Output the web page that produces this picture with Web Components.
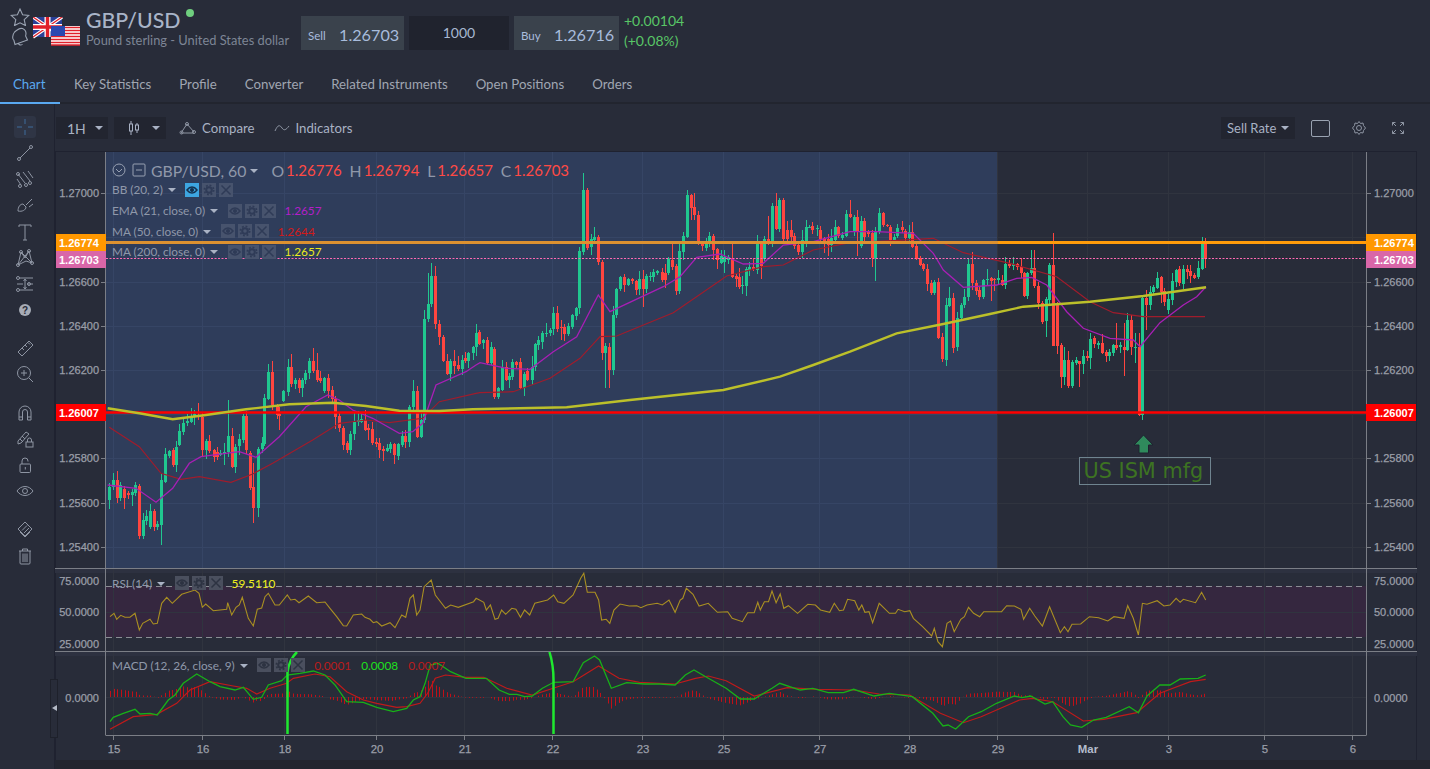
<!DOCTYPE html>
<html lang="en"><head><meta charset="utf-8"><title>GBP/USD</title>
<style>html,body{margin:0;height:100%;background:#282c39;overflow:hidden}</style></head>
<body><app-shell></app-shell>
<script>
const LATO='Lato,"Open Sans",sans-serif';
function comp(name,css,html){customElements.define(name,class extends HTMLElement{connectedCallback(){if(this.shadowRoot)return;const s=this.attachShadow({mode:'open'});const a=n=>this.getAttribute(n)||'';s.innerHTML='<style>'+css+'</style>'+(typeof html==='function'?html(a):html);}});}

comp('app-shell',`:host{display:flex;flex-direction:column;width:1430px;height:769px;font-family:${LATO};color:#a0a6b2;background:#282c39}
.main{display:flex;flex:1;min-height:0}.col{display:flex;flex-direction:column;flex:1;min-width:0}
.foot{flex:1;background:#22252f}`,
`<instrument-header></instrument-header><nav-tabs></nav-tabs><div class="main"><tool-rail></tool-rail><div class="col"><chart-toolbar></chart-toolbar><chart-view></chart-view><div class="foot"></div></div></div>`);

comp('instrument-header',`:host{display:flex;height:70px;box-sizing:border-box;align-items:flex-start;position:relative}
.ic{display:flex;flex-direction:column;width:20px;margin:8px 0 0 10px;gap:1px}
.ic svg{display:block}
.flags{width:47px;height:30px;margin:17px 0 0 3px;display:block}
.t{margin:6px 0 0 6px;width:215px}
.name{font-size:21.300px;line-height:28px;font-weight:500;color:#a9b4c8;display:flex}
.dot{width:8px;height:8px;border-radius:50%;background:#6fcf7f;margin:3px 0 0 6px}
.sub{font-size:12.850px;line-height:14px;color:#7d8595;white-space:nowrap;margin-top:-1px}
.q{display:flex;gap:5px;margin-top:16px}
.chg{margin:11px 0 0 5px;font-size:14px;line-height:20px;color:#59c667}`,
`<div class="ic"><svg width="20" height="18" viewBox="0 0 20 18" fill="none" stroke="#9aa3b2" stroke-width="1.1"><path d="M10 1l2.6 5.7 6.2.7-4.6 4.2 1.3 6L10 14.8 4.500 17.600l1.300-6L1.200 7.400l6.200-.7z"/></svg>
<svg width="20" height="19" viewBox="0 0 20 19" fill="none" stroke="#9aa3b2" stroke-width="1.1"><path d="M12.500 1.500c2.900 1.300 4 4.400 3.100 7.400l1.900 4.100-12.500 4.500-1.100-4.200C2.300 12.300 2 8 4.600 5 6.700 3 10 .8 12.500 1.500zM8 16.200c.6 1.800 2.700 2.300 4.500 1.200"/></svg></div>
<svg class="flags" viewBox="0 0 47 30"><g><rect x="0" y="0" width="29" height="20" fill="#2a3f96"/><path d="M0 0L29 20M29 0L0 20" stroke="#fff" stroke-width="3.400"/><path d="M0 0L29 20M29 0L0 20" stroke="#e0202a" stroke-width="1.300"/><path d="M14.500 0V20M0 10H29" stroke="#fff" stroke-width="6"/><path d="M14.500 0V20M0 10H29" stroke="#e0202a" stroke-width="3.400"/></g>
<g><rect x="18" y="9" width="29" height="19" fill="#fff"/><path d="M18 10.500H47M18 13.500H47M18 16.500H47M18 19.500H47M18 22.500H47M18 25.500H47M18 28H47" stroke="#e0202a" stroke-width="1.500"/><rect x="18" y="9" width="14" height="10" fill="#2b48b0"/></g></svg>
<div class="t"><div class="name">GBP/USD<span class="dot"></span></div><div class="sub">Pound sterling - United States dollar</div></div>
<div class="q"><quote-box label="Sell" value="1.26703" w="103"></quote-box><div style="width:100px;height:34px;background:#20232e;font-size:14px;line-height:34px;text-align:center;color:#a8b8d2">1000</div><quote-box label="Buy" value="1.26716" w="105"></quote-box></div>
<div class="chg">+0.00104<br>(+0.08%)</div>`);

comp('quote-box',`:host{display:block;height:34px;background:#3a424c;box-sizing:border-box;white-space:nowrap}
.b{display:flex;align-items:center;height:100%;box-sizing:border-box;padding:3px 0 0 7px}
.l{font-size:11.500px;color:#a8bcdc;width:31px;margin-top:1px}.v{font-size:16.200px;color:#a8bcdc}`,
a=>`<div class="b" style="width:${a('w')}px"><span class="l" ${a('label')=='Buy'?'style="width:33px"':''}>${a('label')}</span><span class="v">${a('value')}</span></div>`);

comp('nav-tabs',`:host{display:flex;height:34px;box-sizing:border-box;border-bottom:2px solid #22252f;font-size:13.250px;color:#a0a6b2}
span{padding:0 14px;line-height:29px;height:34px;box-sizing:border-box;white-space:nowrap}
.on{color:#5aa9f0;border-bottom:2px solid #5aa9f0;padding:0 0 0 13px;width:60px}`,
`<span class="on">Chart</span><span>Key Statistics</span><span>Profile</span><span>Converter</span><span>Related Instruments</span><span>Open Positions</span><span>Orders</span>`);

const s=(b,w=20,h=20)=>`<svg width="${w}" height="${h}" viewBox="0 0 20 20" fill="none" stroke="#8e95a3" stroke-width="1">${b}</svg>`;
const dotc=(x,y)=>`<circle cx="${x}" cy="${y}" r="1.500"/>`;
comp('tool-rail',`:host{display:flex;flex-direction:column;align-items:center;width:55px;box-sizing:border-box;border-right:1px solid #1f2230;padding:12px 5px 0 0;flex:none}
div{height:26.200px;width:22px;display:flex;align-items:center;justify-content:center;flex:none}
.cur{height:22px;background:#2f3545;border-radius:3px;margin-bottom:1.900px}.g1{margin-top:12px}.g2{margin-top:12px}
svg{display:block;flex:none}`,
`<div class="cur">${s('<path d="M2 10H7M13 10H18M10 2V7M10 13V18" stroke="#3f6d9c"/>')}</div>
<div>${s('<path d="M5 15L15 5"/>'+dotc(4,16)+dotc(16,4))}</div>
<div>${s('<path d="M3 5L10 14M8 3L15 12M13 2L18 9"/><path d="M2 10L6 16"/>'+dotc(5,17)+dotc(11,16)+dotc(3,5)+dotc(15,14))}</div>
<div>${s('<path d="M3 16c0-4 2-7 5-7l3 3c0 3-4 5-8 4zM11 10l6-6M14 12l4-3"/>')}</div>
<div>${s('<path d="M4 3H16M10 3V18M8 18H12M4 3V5M16 3V5"/>')}</div>
<div>${s('<path d="M3 17L6 4L10 10L14 3L17 15L11 13L3 17M6 4L17 15M14 3L3 17"/>'+dotc(3,17)+dotc(6,4)+dotc(14,3)+dotc(17,15))}</div>
<div>${s('<path d="M4 4H18M2 10H8M12 10H18M4 16H18M10 5V15M8.500 7L10 5L11.500 7M8.500 13L10 15L11.500 13"/>'+dotc(3,4)+dotc(14,10)+dotc(3,16))}</div>
<div>${`<svg width="20" height="20" viewBox="0 0 20 20"><circle cx="10" cy="10" r="6" fill="#a7acb6"/><text x="10" y="13.500" text-anchor="middle" font-family="Liberation Sans" font-weight="700" font-size="10" fill="#272b38">?</text></svg>`}</div>
<div class="g1">${s('<path d="M3 14L14 3L18 7L7 18ZM7 10L9 12M10 7L12 9M13 4.500L15 6.500"/>')}</div>
<div>${s('<circle cx="9" cy="9" r="6.500"/><path d="M14 14L18 18M6 9H12M9 6V12" />')}</div>
<div class="g2">${s('<path d="M4 17V9a6 6 0 0 1 12 0V17H12.500V9a2.500 2.500 0 0 0-5 0V17ZM4 14H7.500M12.500 14H16"/>')}</div>
<div>${s('<path d="M3 12L11 3L14 5L6 14L3 15ZM5 10L8 13M7 7L10 10"/><rect x="11" y="13" width="7" height="5"/><path d="M12.500 13v-2a2 2 0 0 1 4 0v2"/>')}</div>
<div>${s('<rect x="5" y="9" width="10.500" height="8.500" rx="1"/><path d="M7 9V6a3 3 0 0 1 6 0v.5M10.300 12v2.500"/>')}</div>
<div>${s('<path d="M2 10c4-6 12-6 16 0c-4 6-12 6-16 0z"/><circle cx="10" cy="10" r="2.500"/>')}</div>
<div class="g1">${s('<path d="M10 3L17 10L10 17L3 10Z"/><path d="M5 13L10 18L15 13M7 11.500L12 6.500M9 14L14 9"/>')}</div>
<div>${s('<path d="M4 5H16M5 5V17a1 1 0 0 0 1 1H14a1 1 0 0 0 1-1V5M7.500 5V3H12.500V5M8 7.500V16M10 7.500V16M12 7.500V16"/>')}</div>`);

comp('drop-select',`:host{display:inline-flex;align-items:center;height:22px;background:#222530;box-sizing:border-box;color:#a9b2c4;font-size:13px;white-space:nowrap;flex:none;justify-content:space-between;padding:0 6px 0 6px}
i{border:4px solid transparent;border-top:4px solid #a9b2c4;border-bottom:0;display:block}`,a=>`<slot></slot><i></i>`);

comp('chart-toolbar',`:host{display:flex;height:47px;align-items:center;box-sizing:border-box;padding:1px 0 0 1px;color:#a9b2c4;font-size:13.200px;position:relative}
.a{display:flex;align-items:center;gap:5px}.sp{flex:1}svg{display:block;flex:none}
.sq{width:17px;height:15px;border:1px solid #9aa3b2;border-radius:2px;margin:0 21px 0 16px}`,
`<drop-select style="width:52px;padding-left:11px;padding-right:5px;font-size:14px">1H</drop-select>
<drop-select style="width:52px;margin-left:6px;padding-left:13px"><svg width="14" height="16" viewBox="0 0 14 16" fill="none" stroke="#a9b2c4"><path d="M4 1V15M10 3V13"/><rect x="2.500" y="4" width="3" height="7" fill="#222530"/><rect x="8.500" y="5" width="3" height="5" fill="#222530"/></svg></drop-select>
<div class="a" style="margin-left:13px"><svg width="18" height="14" viewBox="0 0 18 14" fill="none" stroke="#8e95a3"><path d="M2 12L8 3L15 11M2 12H15"/><circle cx="2.500" cy="11.500" r="1.500"/><circle cx="8" cy="3" r="1.500"/><circle cx="15" cy="11" r="1.500"/></svg><span>Compare</span></div>
<div class="a" style="margin-left:20px"><svg width="16" height="10" viewBox="0 0 16 10" fill="none" stroke="#8e95a3"><path d="M1 8C4 1 6 2 8 5S12 7 15 3"/></svg><span>Indicators</span></div>
<div class="sp"></div>
<drop-select style="width:74px">Sell Rate</drop-select><div class="sq"></div>
<svg width="16" height="16" viewBox="0 0 16 16" fill="none" stroke="#8e95a3"><circle cx="8" cy="8" r="2.500"/><path d="M8 1.500L9.500 3.500L12 3L12.500 5.500L14.500 8L12.500 10.500L12 13L9.500 12.500L8 14.500L6.500 12.500L4 13L3.500 10.500L1.500 8L3.500 5.500L4 3L6.500 3.500Z"/></svg>
<svg style="margin:0 25px 0 24px" width="14" height="14" viewBox="0 0 14 14" fill="none" stroke="#8e95a3"><path d="M1.500 1.500L5 5M12.500 1.500L9 5M1.500 12.500L5 9M12.500 12.500L9 9M1.500 4.500V1.500H4.500M9.500 1.500H12.500V4.500M1.500 9.500V12.500H4.500M9.500 12.500H12.500V9.500"/></svg>`);

comp('mini-btns',`:host{display:inline-flex;gap:3px;vertical-align:middle}
b{display:block;width:14px;height:14px;background:var(--b,#47536d)}
b.on{background:#3da5e0}svg{display:block}`,
a=>{const d=a('dark');const c=d?'#2d3342':'#2f3b57';const bg=d?'style="background:#4a4f5e"':'';const eye=`<svg viewBox="0 0 14 14" width="14" height="14" fill="none" stroke="${a('on')?'#14314f':c}" stroke-width="1.500"><path d="M2 7c3-4 7-4 10 0c-3 4-7 4-10 0z"/><circle cx="7" cy="7" r="1.300" fill="${a('on')?'#14314f':c}"/></svg>`;
return `<b class="${a('on')?'on':''}" ${bg}>${eye}</b><b ${bg}><svg viewBox="0 0 14 14" width="14" height="14" fill="none" stroke="${c}"><circle cx="7" cy="7" r="2.800" stroke-width="2"/><circle cx="7" cy="7" r="4.700" stroke-width="1.600" stroke-dasharray="1.850 1.840"/></svg></b><b ${bg}><svg viewBox="0 0 14 14" width="14" height="14" fill="none" stroke="${c}" stroke-width="1.500"><path d="M2.500 2.500L11.500 11.500M11.500 2.500L2.500 11.500"/></svg></b>`});

comp('ind-row',`:host{display:flex;align-items:center;height:20.700px;font-size:11.800px;color:#8f98aa;white-space:nowrap}
i{border:4px solid transparent;border-top:4px solid #a9b2c4;border-bottom:0;margin:1px 9.500px 0 5px;display:block}
.v{font-size:11.800px;margin-left:9px}`,
a=>`<span>${a('name')}</span><i></i><mini-btns ${a('on')?'on="1"':''} ${a('dark')?'dark="1"':''}></mini-btns>${(a('v')?a('v').split('|'):[]).map((x,i)=>{const[t,c]=x.split('~');return `<span class="v" style="color:${c};${i?'margin-left:10px':''}">${t}</span>`}).join('')}`);

comp('chart-legend',`:host{display:block;position:absolute;left:57px;top:8px;color:#8f98aa;white-space:nowrap;font-size:15.800px}
.m{display:flex;align-items:center;height:22px;margin-bottom:0}
i{border:4px solid transparent;border-top:4px solid #a9b2c4;border-bottom:0;margin:1px 13px 0 4px;display:block}
.l{margin-right:2px}.r{color:#ff4a44;font-size:15px;margin-right:6.500px;width:57px}svg{display:block;flex:none}
.rows{margin-top:-1.500px}`,
`<div class="m"><svg width="14" height="14" viewBox="0 0 14 14" fill="none" stroke="#98a1b2"><circle cx="7" cy="7" r="6"/><path d="M4 6L7 9L10 6"/></svg><svg style="margin:0 5px 0 6px" width="14" height="14" viewBox="0 0 14 14" fill="none" stroke="#98a1b2"><rect x="1" y="1" width="12" height="12" rx="1"/><path d="M4 7H10"/></svg><span>GBP/USD, 60</span><i></i><span class="l">O</span><span class="r">1.26776</span><span class="l">H</span><span class="r">1.26794</span><span class="l">L</span><span class="r">1.26657</span><span class="l">C</span><span class="r">1.26703</span></div>
<div class="rows"><ind-row name="BB (20, 2)" on="1"></ind-row><ind-row name="EMA (21, close, 0)" v="1.2657~#b41ec9"></ind-row><ind-row name="MA (50, close, 0)" v="1.2644~#d21a1a"></ind-row><ind-row name="MA (200, close, 0)" v="1.2657~#eaea1c"></ind-row></div>`);

comp('pane-legend',`:host{display:block;position:absolute;left:57px;white-space:nowrap}`,a=>`<ind-row name="${a('name')}" v="${a('v')}" dark="1"></ind-row>`);

/* --- chart data, in reference crop coordinates --- */
const C9=`g10 710 750,g22 690 712,r32 690 745,g43 705 745,r55 718 745,r67 728 735,g77 725 735,g88 706 730,r100 708 858,g110 810 858,g121 798 812,g132 783 830,r143 783 830,g154 822 830,g165 690 825 670 885,g178 612 695,g188 604 620,r200 600 645,g210 590 645,g220 543 585,g232 518 545,g243 514 520,g254 498 515,g265 492 500,r277 495 500 460 510,r288 500 600,g300 573 600,r310 573 603,r325 600 620,r332 605 620,g343 610 615,g354 605 612,g365 558 607 450 620,r377 558 650,g388 590 650,g400 568 590,g410 498 570,r420 498 600,r433 610 715,r442 710 773 640 820,g455 597 773,g467 580 597,g475 443 580,g487 365 445 343 450,r498 365 465 333 480,r512 465 495,r520 492 497 470 540,g532 423 453,g545 350 425,r555 350 400 312 412,g566 390 402,r578 390 413,g589 390 415,g598 370 390,g610 333 370,r622 333 362 295 370,r632 360 390 310 395,r643 385 395,g655 385 423,r665 383 423,r678 420 447,r688 447 500,r700 498 533,r710 533 583,r722 578 600,g733 553 600,g743 517 553,g755 510 517,g765 507 515,r776 510 540,r787 535 540,r798 538 580,r810 575 580,r820 578 600,r832 597 603,g843 593 603,g853 583 597,r865 583 617,g877 583 620,g887 558 585,r898 558 575,g910 470 575,g920 423 470 390 480,r932 423 560,g944 510 560,g955 207 510,g965 163 207 70 215,g975 78 163 40 170,r988 78 222,r998 222 262,r1010 260 332,r1022 332 372,g1033 333 372,r1043 333 347,r1055 345 358,g1067 330 358,r1077 325 335,g1087 310 335,g1100 292 310,g1110 248 290,r1120 245 280`;
const C10=`g10 510 520,r22 510 580,g32 532 580,r43 538 682,g55 655 682,g65 590 658,r77 590 630,g87 618 630,g97 575 620,r108 575 585,r120 575 653,g132 613 655,r142 602 630,g155 590 630,g165 522 590,g175 510 525,g187 488 515,g198 488 490,g210 480 490,g220 430 478,r232 428 475,r243 470 473,r253 470 492,g265 468 492,g277 435 470,g287 413 437,g298 243 415,g310 60 245 8 255,r322 60 233,g332 208 233,g343 200 210,r355 200 275,r365 275 548,g376 528 548 520 655,r388 530 600 520 655,g398 435 600,g408 358 435,g420 322 358,r432 322 345,g443 327 345,r455 327 333,r467 333 360,g477 327 358,r488 327 357 300 412,g498 318 357,g510 318 320,g520 305 320,g532 303 308,r545 305 328,r555 310 330,g565 268 310,r577 270 290 222 300,r587 288 362,g598 243 362,g610 198 245,g620 75 200 60 205,r632 75 113,r643 112 135 68 150,r655 135 222,r665 222 228,g677 212 232,g688 198 222,r698 198 240,r710 238 272,g722 258 278,g732 262 278,g743 262 270,r755 263 320,r767 318 328,r776 320 350,g787 345 348,g798 298 348,g808 290 300,r820 292 298,g832 222 300,r842 223 290,g853 208 268,r865 208 222 138 225,g877 108 218,r887 108 178 70 180,g898 90 178,r910 90 208,r920 180 208,r932 180 202,r943 198 228,r953 225 245,g965 210 245,g977 172 215,g987 170 172,r997 168 180,g1010 175 178,r1020 180 208,r1032 205 218,r1043 208 225,g1053 205 225,g1065 172 210,r1075 172 200,g1087 195 205,g1098 132 197,r1110 132 140 90 145,g1122 140 185,r1132 143 185 120 258`;
const C11=`r22 82 125,g32 93 168,r43 93 140,r55 125 130,r65 130 205,g76 127 205 110 272,g88 70 127,r100 70 106,r110 106 108,r120 110 148,g132 140 148,g142 115 140,r155 112 122,r165 122 143,g178 125 143,r187 125 170,r198 168 208,r210 205 225,r220 222 238,r232 236 282,r243 280 310,g253 276 308,r265 276 443,r277 442 508,g288 345 510 325 527,g298 324 347 292 350,r310 324 473,g322 385 473,g332 345 385,g343 322 345,g355 222 322,r365 222 280 185 300,r377 278 302,r388 300 320,g400 270 320,g410 268 272,r422 265 275 260 332,r433 268 272,g443 265 272,r455 270 285,g465 222 285,r477 223 228,g488 223 228 200 240,r500 222 232,r512 232 250,r522 250 318,g532 250 318,g543 235 250 180 255,r553 235 290 180 295,r565 288 340,r577 338 395,g587 328 395 320 440,g598 225 330,r610 225 467 130 385,r622 338 467,r632 465 560,g643 510 560,r655 510 588,g665 517 588,g677 510 518,r688 513 522 513 590,g698 497 522,r710 497 503,g721 447 503,r733 443 462,g743 458 465,r755 458 487,r767 487 500,g777 487 500,g788 465 488,r799 465 473 400 480,g810 465 472,r821 470 480 400 557,g832 390 480 368 482,r844 390 472,g855 472 475 430 518,r866 472 675 428 678,g877 325 675,r887 325 345 300 420,g899 305 345,g910 290 305,g922 263 292,r932 260 305,r943 302 335,g955 328 362,g965 272 330,g977 240 275,r988 238 280,g999 238 282,r1010 236 245,r1021 243 258,r1032 255 263,g1043 235 263,g1055 155 235,r1066 155 205 145 233`;
const tr=(str,x0,y0)=>str.split(',').map(t=>{const p=t.slice(1).split(' ').map(Number);return{c:t[0],x:x0+p[0]/3,t:y0+p[1]/3,b:y0+p[2]/3,wt:p[3]!==undefined?y0+p[3]/3:null,wb:p[4]!==undefined?y0+p[4]/3:null}});
const candles=[...tr(C9,106,250),...tr(C10,480,170),...tr(C11,850,190)];
const P=(str,x0,y0,sx=3,sy=3)=>str.trim().split(/\s+/).map(t=>{const[a,b]=t.split(',').map(Number);return[x0+a/sx,y0+b/sy]});
const pth=a=>'M'+a.map(p=>p[0].toFixed(1)+' '+p[1].toFixed(1)).join('L');
const L={
 ma200:[...P('5,475 100,490 200,508 300,495 420,478 550,463 680,458 780,468 880,482 1000,483 1100,478',106,250),...P('260,712 450,690 730,660 900,620 1000,585 1110,545',480,170),...P('140,430 280,402 420,372 520,350 720,335 880,318 1068,292',850,190)],
 ema:[...P('5,705 90,715 150,757 200,715 250,640 285,620 400,605 450,622 520,560 600,470 665,435 700,450 740,480 800,505 880,550 920,545 950,520 990,405 1080,365 1110,345',106,250),...P('0,578 80,595 150,598 220,545 290,500 355,375 390,425 550,350 600,320 650,262 720,252 790,282 850,280 910,225 1000,215 1110,185',480,170),...P('80,125 190,130 250,190 280,240 340,292 440,285 500,265 545,262 590,285 650,365 700,415 780,445 850,450 870,470 930,398 1000,345 1040,320 1068,290',850,190)],
 ma50:[...P('10,532 100,590 165,670 225,688 280,680 375,697 440,672 500,640 620,570 700,520 780,510 850,518 950,505 1000,455 1110,430',106,250),...P('0,668 100,665 210,625 300,565 360,500 410,498 580,428 740,318 850,290 910,285 1000,240 1110,218',480,170),...P('130,152 250,145 340,188 480,220 620,260 720,335 790,368 880,380 1065,380',850,190)],
 rsi:[...P('330,170 342,160 350,178 362,166 375,172 390,172 405,160 418,210 428,190 450,178 460,192 472,190 485,130 500,112 517,130 545,103 585,90 597,100 607,142 617,132 640,152 680,148 683,128 695,165 708,142 718,135 727,112 745,175 760,198 772,148 785,144 795,110 805,100 825,135 838,135 862,105 872,120 885,118 897,128 925,108 950,128 975,126 990,145 1010,170 1030,197 1040,198 1060,165 1085,162 1095,172 1110,178 1120,188 1130,185 1145,198 1170,188 1185,203 1205,165 1217,172 1230,115 1240,105 1250,165',0,560),
  ...P('0,150 8,80 22,60 30,105 50,145 60,135 75,142 105,125 110,115 125,127 130,150 138,135 147,178 153,175 160,150 168,163 180,145 188,148 197,172 205,150 215,165 225,130 250,120 262,105 270,125 282,130 300,105 315,55 321,40 328,97 343,97 350,120 356,180 365,178 372,190 380,150 392,132 410,138 425,137 433,143 445,135 465,130 475,135 488,120 500,157 510,120 515,115 522,85 535,103 547,138 565,130 583,157 603,155 612,175 632,185 642,158 655,158 662,127 667,150 675,125 683,125 690,93 698,128 706,102 713,145 722,137 740,160 760,133 775,135 785,150 803,157 812,130 822,152 830,150 838,118 852,122 860,150 866,135 872,157 880,155 887,188 900,130 920,160 932,160 937,148 950,155 960,152 967,175 985,200 1003,228 1008,205 1015,245 1024,260 1033,190 1040,183 1047,215 1060,178 1067,170 1075,142 1085,160 1097,170 1105,155 1140,155 1150,137 1165,138 1178,148 1183,178 1195,145 1205,168 1220,198 1234,140 1255,218 1263,200 1270,215 1278,193 1295,192 1312,170 1330,173 1348,183 1360,170 1380,175 1387,137 1398,175 1408,225 1416,130 1425,133 1445,122 1458,138 1470,135 1482,115 1490,127 1496,118 1520,128 1532,97 1540,120',420,560,1.96,3)],
 mg:[...P('330,485 340,472 370,460 405,448 420,462 450,460 472,465 505,420 525,405 550,370 590,342 630,365 660,380 705,390 730,382 760,418 785,412 805,375 845,362 862,345 900,340 940,333 975,345 1005,375 1040,425 1090,427 1130,442 1180,455 1220,445 1240,420',0,560),
  ...P('0,410 10,370 20,315 35,310 60,335 90,355 130,355 155,390 175,403 190,403 205,410 220,408 240,385 262,367 300,365 320,308 342,288 352,300 375,385 405,368 440,372 470,372 500,375 520,345 537,330 560,350 600,385 628,417 655,417 690,385 705,370 745,390 770,385 800,398 830,398 850,388 890,408 920,400 965,410 1005,460 1025,498 1035,495 1050,507 1075,470 1100,455 1130,430 1165,408 1180,413 1197,408 1225,432 1240,425 1260,470 1275,495 1297,502 1320,480 1345,472 1390,440 1408,458 1425,408 1450,375 1470,375 1490,357 1525,355 1540,345',420,560,1.96,3)],
 mr:[...P('330,508 400,470 470,463 530,430 570,390 630,365 700,378 740,385 770,402 810,385 860,370 880,355 945,342 990,350 1040,395 1090,420 1130,430 1190,442 1220,440',0,560),
  ...P('0,430 15,400 30,355 50,345 90,352 125,352 170,385 220,405 270,380 300,365 350,318 390,355 430,367 500,372 540,355 565,348 600,362 655,408 720,383 780,388 850,390 900,402 960,405 1020,460 1065,488 1100,470 1175,420 1200,415 1240,425 1300,483 1340,478 1405,458 1450,400 1510,365 1540,358',420,560,1.96,3)]
};
const at=(a,x)=>{for(let i=1;i<a.length;i++)if(x<=a[i][0]){const t=(x-a[i-1][0])/(a[i][0]-a[i-1][0]||1);return a[i-1][1]+t*(a[i][1]-a[i-1][1])}return a[a.length-1][1]};

function buildChart(){
 let seed=12345;const R=()=>(seed=(seed*1103515245+12345)&0x7fffffff)/0x7fffffff;
 const px0=106,px1=1366,top=152;
 const days=[['15',114],['16',203],['18',285],['20',377],['21',465],['22',553],['23',643],['25',724],['27',820],['28',910],['29',998],['Mar',1088],['3',1169],['5',1265],['6',1353]];
 const prices=[['1.27000',193],['1.26600',282],['1.26400',326],['1.26200',370],['1.25800',458],['1.25600',503],['1.25400',547]];
 const gridY=[193,237,282,326,370,414,458,503,547];
 let o='';
 o+=`<rect x="${px0}" y="${top}" width="892" height="416" fill="#2f3d5b"/>`;
 o+=`<rect x="${px0}" y="586" width="1260" height="51" fill="#35273f"/>`;
 o+=`<rect x="55" y="569" width="1362" height="4" fill="#2d3140"/><rect x="55" y="652" width="1362" height="4" fill="#2d3140"/>`;
 let g='';
 for(const y of gridY){g+=`<path d="M${px0} ${y+.5}H998" stroke="#364565"/><path d="M998 ${y+.5}H${px1}" stroke="#30343f"/>`;}
 for(const [,x] of days){const xx=Math.round(x)-.5;g+=`<path d="M${xx} ${top}V568" stroke="${x<998?'#364565':'#30343f'}"/><path d="M${xx} 569V735" stroke="#30343f"/>`;}
 g+=`<path d="M${px0} 612.500H${px1}M${px0} 697.500H${px1}" stroke="#30343f"/>`;
 o+=g;
 let cg='',cr='',wg='',wr='';
 for(const c of candles){const x=Math.round(c.x);const wt=c.wt??c.t-(1+R()*R()*13);const wb=c.wb??c.b+(1+R()*R()*13);
  const body=`M${x-1} ${Math.round(c.t)}h3v${Math.max(1,Math.round(c.b-c.t))}h-3z`;const w=`M${x+.5} ${wt.toFixed(0)}V${wb.toFixed(0)}`;
  if(c.c=='g'){cg+=body;wg+=w}else{cr+=body;wr+=w}}
 o+=`<path d="${wg}" stroke="#20c78f"/><path d="${wr}" stroke="#ff453f"/><path d="${cg}" fill="#20c78f"/><path d="${cr}" fill="#ff453f"/>`;
 o+=`<path d="${pth(L.ma50)}" fill="none" stroke="#a01c2c" stroke-width="1.200"/>`;
 o+=`<path d="${pth(L.ema)}" fill="none" stroke="#a81fb5" stroke-width="1.300"/>`;
 o+=`<path d="M${px0} 242.500H998" stroke="#dc9130" stroke-width="3"/><path d="M998 242.500H${px1}" stroke="#ff9b0a" stroke-width="3"/>`;
 o+=`<path d="M${px0} 258.500H${px1}" stroke="#ff69b4" stroke-dasharray="2 1.500"/>`;
 o+=`<path d="M${px0} 412.500H${px1}" stroke="#ff0000" stroke-width="2.500"/>`;
 o+=`<path d="${pth(L.ma200)}" fill="none" stroke="#bcc02a" stroke-width="2.400"/>`;
 o+=`<path d="M1143.500 435L1153 445H1148.500V453H1139V445H1134Z" fill="#2f8a5c" stroke="#1e2230" stroke-width="1"/>`;
 o+=`<rect x="1079.500" y="457.500" width="131" height="27" fill="none" stroke="#6f8490"/><text x="1083.500" y="478" font-family="DejaVu Sans" font-size="20.800" fill="#3d7322">US ISM mfg</text>`;
 o+=`<path d="M${px0} 586.500H${px1}M${px0} 637.500H${px1}" stroke="#8a8d94" stroke-dasharray="6 4"/>`;
 o+=`<path d="${pth(L.rsi)}" fill="none" stroke="#a98f22" stroke-width="1.100"/>`;
 let h='';for(let x=110;x<=1207;x+=3.66){const d=(at(L.mr,x)-at(L.mg,x))*.8;const xx=Math.round(x)+.5;h+=`M${xx} 697V${(697-d).toFixed(1)}`}
 o+=`<path d="${h}" stroke="#c01018"/>`;
 o+=`<path d="${pth(L.mr)}" fill="none" stroke="#c01a1a" stroke-width="1.200"/><path d="${pth(L.mg)}" fill="none" stroke="#18b018" stroke-width="1.300"/>`;
 o+=`<path d="M287.500 734V672Q289 660 297 652M553.500 734V680Q553.500 665 549.500 652" fill="none" stroke="#1fe82f" stroke-width="2.500"/>`;
 o+=`<path d="M${px0-.5} ${top}V735.500M${px1+.5} ${top}V735.500M55 568.500H1417M55 651.500H1417M${px0} 735.500H${px1}" stroke="#7b7e86" stroke-width="1" fill="none"/>`;
 const lab='font-family="Liberation Sans" font-size="11" fill="#9a9ea8" stroke="#9a9ea8" stroke-width=".25"';
 for(const [t,y] of prices){o+=`<text x="99" y="${y+4}" text-anchor="end" ${lab}>${t}</text><text x="1374" y="${y+4}" ${lab}>${t}</text><path d="M101 ${y+.5}H106M1366 ${y+.5}H1371" stroke="#7b7e86"/>`}
 for(const [t,y] of [['75.0000',581],['50.0000',612],['25.0000',644]]){o+=`<text x="99" y="${y+4}" text-anchor="end" ${lab}>${t}</text><text x="1374" y="${y+4}" ${lab}>${t}</text>`}
 o+=`<text x="99" y="702" text-anchor="end" ${lab}>0.0000</text><text x="1374" y="702" ${lab}>0.0000</text>`;
 for(const [t,x] of days){o+=`<text x="${x}" y="753" text-anchor="middle" font-family="Liberation Sans" font-size="11.400" ${t=='Mar'?'font-weight="700" fill="#b4bccd"':'fill="#9a9ea8" stroke="#9a9ea8" stroke-width=".25"'}>${t}</text><path d="M${x-.5} 736V740" stroke="#7b7e86"/>`}
 for(const [t,y,h2,c] of [['1.26774',234,17,'#ff9800'],['1.26703',251,17,'#d966a8'],['1.26007',404,17,'#ff0000']]){for(const [x,w,tx] of [[56,50,59],[1366,50,1374]]){o+=`<rect x="${x}" y="${y}" width="${w}" height="${h2}" fill="${c}"/><text x="${tx}" y="${y+12.500}" font-family="Liberation Sans" font-weight="700" font-size="11" fill="#fff">${t}</text>`;}}
 o+=`<rect x="50.500" y="679.500" width="7" height="58" fill="#282c39" stroke="#1e212b"/><path d="M52 708L57 705V711Z" fill="#b4bac6"/>`;
 return `<svg viewBox="50 151 1367 609" width="1367" height="609" style="display:block;margin-left:-5px;overflow:visible">${o}</svg>`;
}
comp('chart-view',`:host{display:block;position:relative;width:1362px;height:609px;background:#282c39;box-shadow:inset 0 1px 0 #1f2230,inset 1px 0 0 #1f2230,inset -1px 0 0 #1f2230}`,
()=>buildChart()+`<chart-legend></chart-legend><pane-legend style="top:422px" name="RSI (14)" v="59.5110~#f0f01c"></pane-legend><pane-legend style="top:504px" name="MACD (12, 26, close, 9)" v="0.0001~#b81c1c|0.0008~#1ee01e|0.0007~#b81c1c"></pane-legend>`);
</script></body></html>
